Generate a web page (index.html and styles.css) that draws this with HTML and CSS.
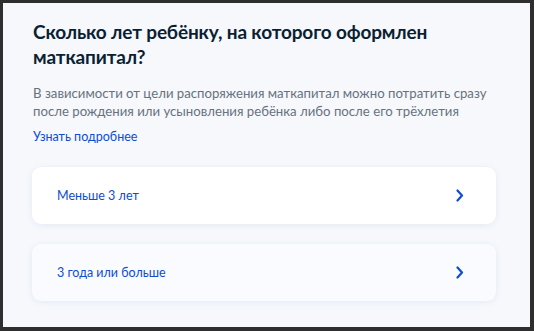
FILE: index.html
```html
<!DOCTYPE html>
<html lang="ru">
<head>
	<meta charset="utf-8">
	<title>Маткапитал</title>
	<link rel="stylesheet" href="styles.css">
</head>
<body>
	<div class="frame">
		<h1 class="title">Сколько лет ребёнку, на которого оформлен маткапитал?</h1>
		<p class="lead">В зависимости от цели распоряжения маткапитал можно потратить сразу после рождения или усыновления ребёнка либо после его трёхлетия</p>
		<a class="more" href="#">Узнать подробнее</a>

		<div class="options">
			<a class="option option-first" href="#">
				<span>Меньше 3 лет</span>
				<svg class="chevron" width="8" height="13" viewBox="0 0 8 13"><path d="M1.5 1.5 L6 6.5 L1.5 11.5" fill="none" stroke="#0d4cd3" stroke-width="2.2" stroke-linecap="round" stroke-linejoin="round"/></svg>
			</a>
			<a class="option" href="#">
				<span>3 года или больше</span>
				<svg class="chevron" width="8" height="13" viewBox="0 0 8 13"><path d="M1.5 1.5 L6 6.5 L1.5 11.5" fill="none" stroke="#0d4cd3" stroke-width="2.2" stroke-linecap="round" stroke-linejoin="round"/></svg>
			</a>
		</div>
	</div>
</body>
</html>
```

FILE: styles.css
```css
html, body{
	margin: 0;
	padding: 0;
}
body{
	font-family: Lato, "Noto Sans", sans-serif;
	background-color: #2e2e2e;
}
.frame{
	box-sizing: border-box;
	width: 534px;
	height: 331px;
	border-style: solid;
	border-color: #2e2e2e;
	border-width: 3px 4px 4px 3px;
	background-color: #f6f8fc;
	padding: 16px 34px 0 29px;
	overflow: hidden;
}
.title{
	margin: 0;
	font-size: 19px;
	letter-spacing: -0.15px;
	line-height: 25px;
	font-weight: 700;
	color: #0b1f33;
	padding-left: 1px;
}
.lead{
	margin: 15px 0 0;
	font-size: 13.2px;
	line-height: 18px;
	color: #66727f;
	padding-left: 1px;
}
.more{
	display: block;
	margin-top: 8px;
	font-size: 12.5px;
	line-height: 18px;
	color: #0d4cd3;
	text-decoration: none;
	padding-left: 1px;
}
.options{
	display: flex;
	flex-direction: column;
	gap: 20px;
	margin-top: 21px;
}
.option{
	display: flex;
	align-items: center;
	justify-content: space-between;
	height: 57px;
	box-sizing: border-box;
	padding: 0 32px 0 25px;
	border-radius: 9px;
	background-color: #f9fbff;
	box-shadow: 0 1px 6px rgba(102, 128, 180, 0.12);
	font-size: 12.5px;
	color: #0d4cd3;
	text-decoration: none;
}
.option-first{
	background-color: #ffffff;
}
.chevron{
	display: block;
}
```
